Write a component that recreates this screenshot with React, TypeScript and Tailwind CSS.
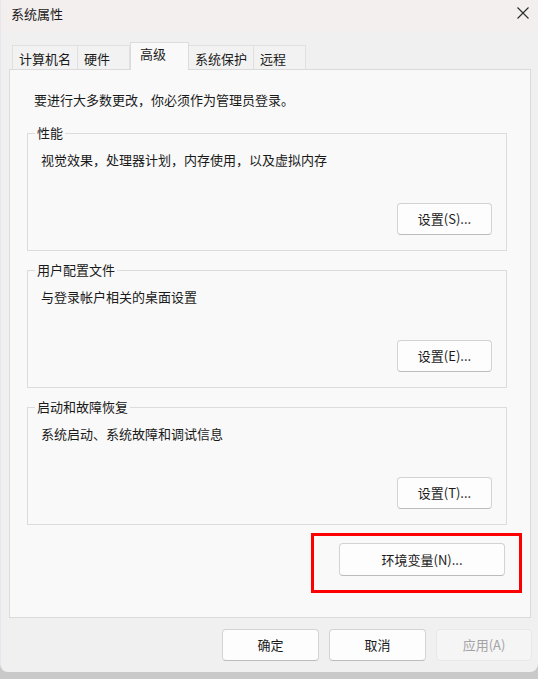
import React from 'react';

const btn =
  'h-[32px] rounded-[4px] border border-[#d3d3d3] border-b-[#bcbcbc] bg-[#fdfdfd] text-[13px] leading-[18px] text-[#1a1a1a] flex items-center justify-center';

interface Tab {
  label: string;
  width: string;
  active?: boolean;
}

const tabs: Tab[] = [
  { label: '计算机名', width: 'w-[66px]' },
  { label: '硬件', width: 'w-[52px]' },
  { label: '高级', width: 'w-[59px]', active: true },
  { label: '系统保护', width: 'w-[65px]' },
  { label: '远程', width: 'w-[52px]' },
];

function GroupBox({ title, desc, action, className = '' }: { title: string; desc: string; action: string; className?: string }) {
  return (
    <div className={`relative flex h-[118px] w-[480px] flex-col border border-[#dcdcdc] pt-[17px] pb-[15px] pl-[13px] pr-[14px] ${className}`}>
      <span className="absolute -top-[10px] left-[7px] bg-[#f9f9f9] px-[2px] leading-[18px]">{title}</span>
      <p className="leading-[18px]">{desc}</p>
      <button className={`${btn} mt-auto w-[95px] self-end`}>{action}</button>
    </div>
  );
}

export default function App() {
  return (
    <div className="h-[679px] w-[538px] overflow-hidden bg-[#c9c9c9] font-['Noto_Sans_CJK_SC',sans-serif] text-[13px] text-[#1a1a1a]">
      <div className="flex h-[672px] w-[538px] flex-col rounded-b-[8px] border-l border-[#e6e4ec] bg-[#f0f0f0]">
        {/* 标题栏 */}
        <div className="flex h-[32px] items-center justify-between bg-[#f3efee] pl-[10px] pr-[9px]">
          <span className="leading-[18px] -mt-[4px]">系统属性</span>
          <svg width="12" height="12" viewBox="0 0 12 12" className="-mt-[6px]" fill="none" stroke="#2a2a2a" strokeWidth="1.1">
            <path d="M0.5 0.5L11.5 11.5M11.5 0.5L0.5 11.5" />
          </svg>
        </div>

        {/* 选项卡 */}
        <div className="flex h-[37px] items-end pl-[11px]">
          {tabs.map((t) =>
            t.active ? (
              <div
                key={t.label}
                className={`${t.width} relative z-10 -mb-px h-[28px] border border-b-0 border-[#dcdcdc] bg-[#f9f9f9] pl-[9px] pt-[2px] leading-[18px]`}
              >
                {t.label}
              </div>
            ) : (
              <div
                key={t.label}
                className={`${t.width} h-[24px] border border-b-0 border-l-0 first:border-l border-[#e0e0e0] bg-[#f2f2f2] pl-[6px] pt-[4px] leading-[18px]`}
              >
                {t.label}
              </div>
            )
          )}
        </div>

        {/* 内容面板 */}
        <div className="relative ml-[8px] flex h-[549px] w-[522px] flex-col border border-[#dadada] bg-[#f9f9f9] pl-[17px] pt-[21px]">
          <p className="ml-[7px] leading-[18px]">要进行大多数更改，你必须作为管理员登录。</p>
          <GroupBox className="mt-[24px]" title="性能" desc="视觉效果，处理器计划，内存使用，以及虚拟内存" action="设置(S)..." />
          <GroupBox className="mt-[19px]" title="用户配置文件" desc="与登录帐户相关的桌面设置" action="设置(E)..." />
          <GroupBox className="mt-[19px]" title="启动和故障恢复" desc="系统启动、系统故障和调试信息" action="设置(T)..." />
          <button className={`${btn} mt-[18px] mr-[25px] h-[33px] w-[166px] self-end border-[#5b9ad8] border-b-[#5b9ad8]`}>
            环境变量(N)...
          </button>
          {/* 红框标注 */}
          <div className="pointer-events-none absolute left-[301px] top-[463px] h-[60px] w-[211px] border-[3px] border-[#ff0000]" />
        </div>

        {/* 底部按钮 */}
        <div className="mt-[11px] flex justify-end gap-[10px] pr-[6px]">
          <button className={`${btn} w-[97px]`}>确定</button>
          <button className={`${btn} w-[97px]`}>取消</button>
          <button className="flex h-[32px] w-[96px] items-center justify-center rounded-[4px] border border-[#e8e8e8] bg-[#f5f5f5] text-[13px] text-[#a3a3a3]">
            应用(A)
          </button>
        </div>
      </div>
    </div>
  );
}
